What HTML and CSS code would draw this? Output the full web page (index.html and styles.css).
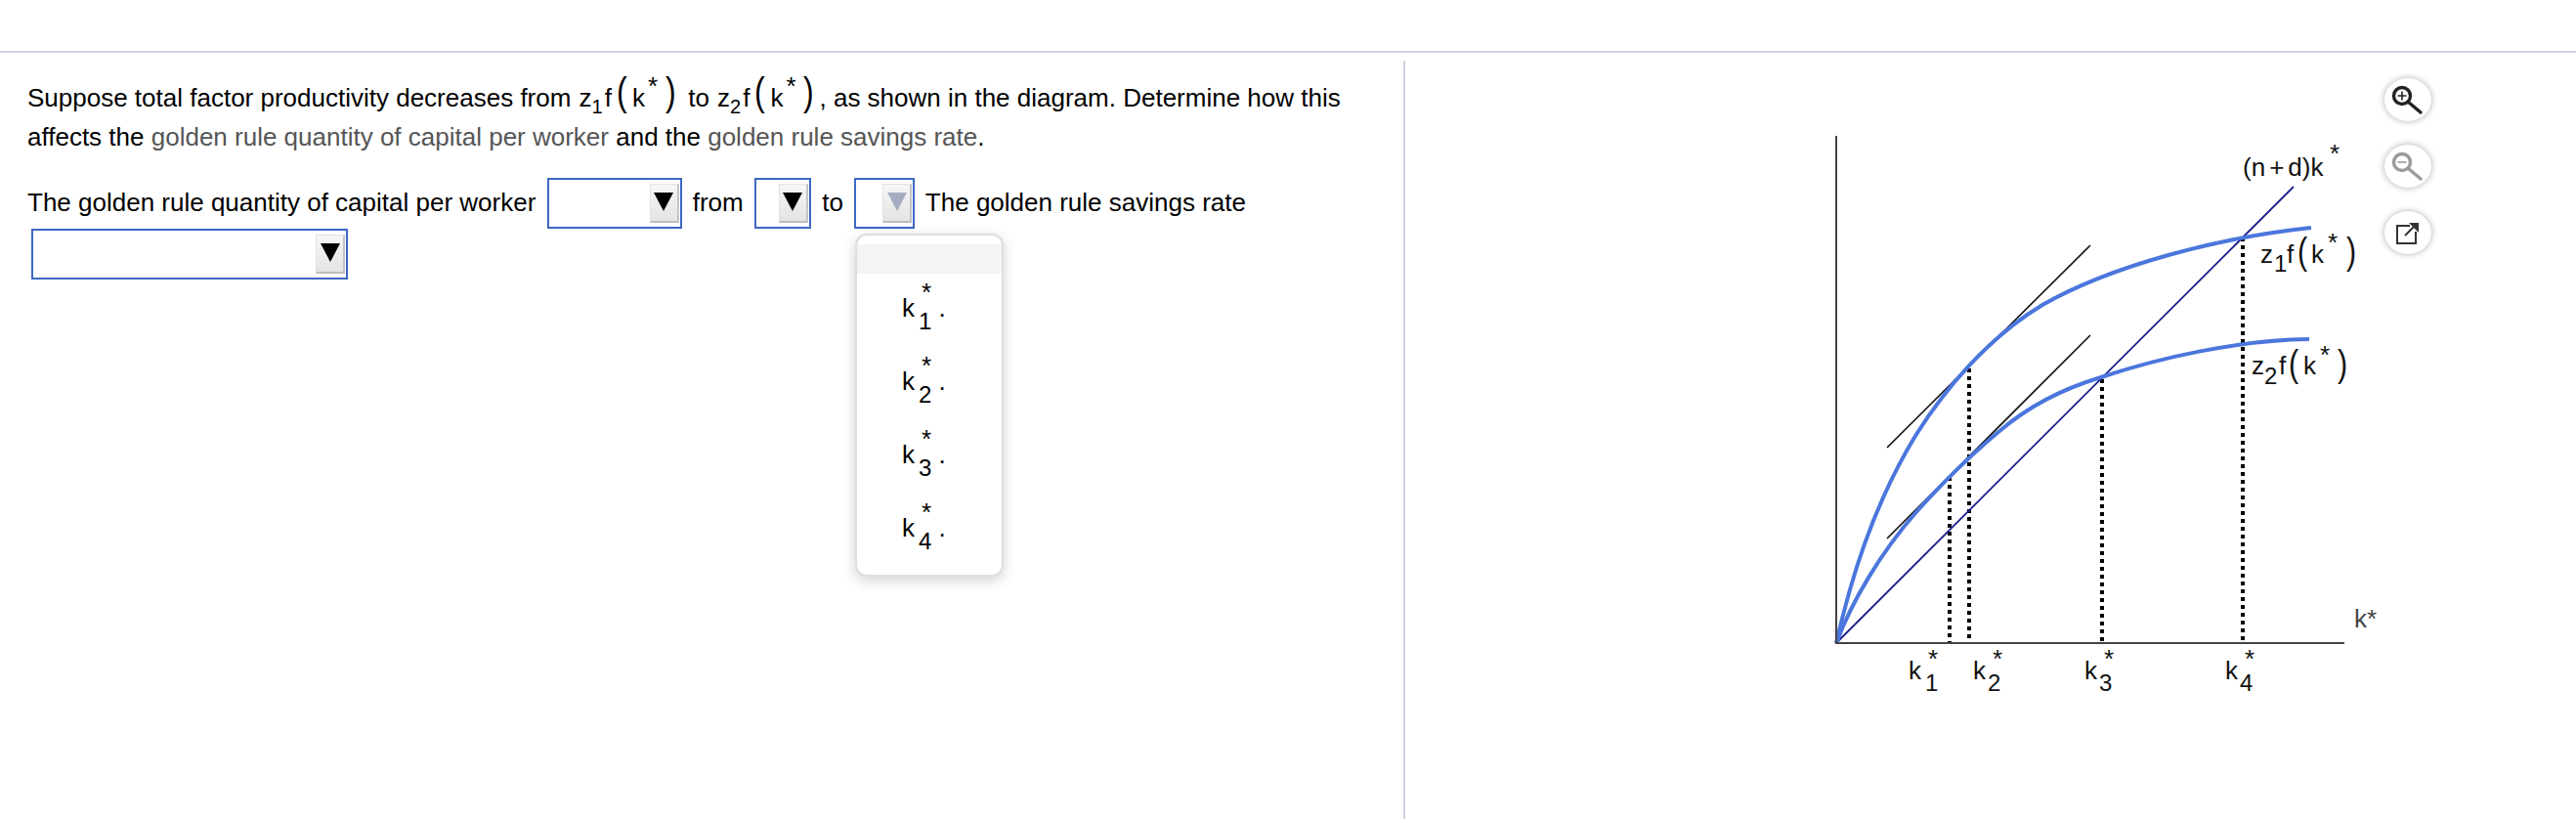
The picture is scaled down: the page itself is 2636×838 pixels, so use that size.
FILE: index.html
```html
<!DOCTYPE html>
<html lang="en">
<head>
<meta charset="utf-8">
<title>Golden rule question</title>
<link rel="stylesheet" href="styles.css">
</head>
<body>
<header class="topbar"></header>
<main class="layout">
  <section class="question">
    <p class="intro">Suppose total factor productivity decreases from <span class="m"><span class="mz">z<span class="msub">1</span></span><span class="mf">f</span><span class="paren">(</span><span class="mk">k</span><span class="mstar">*</span><span class="paren pr">)</span></span> to <span class="m"><span class="mz">z<span class="msub">2</span></span><span class="mf">f</span><span class="paren">(</span><span class="mk">k</span><span class="mstar">*</span><span class="paren pr">)</span></span>, as shown in the diagram. Determine how this affects the <span class="term">golden rule quantity of capital per worker</span> and the <span class="term">golden rule savings rate</span>.</p>
    <p class="answer">The golden rule quantity of capital per worker <span class="select w138"><span class="btn"><i class="arrow"></i></span></span> from <span class="select w58"><span class="btn"><i class="arrow"></i></span></span> to <span class="select w62 open"><span class="btn"><i class="arrow off"></i></span><span class="menu"><span class="opt blank"></span><span class="opt"><span class="k">k</span><span class="script"><span>*</span><span>1</span></span><span class="dot">.</span></span><span class="opt"><span class="k">k</span><span class="script"><span>*</span><span>2</span></span><span class="dot">.</span></span><span class="opt"><span class="k">k</span><span class="script"><span>*</span><span>3</span></span><span class="dot">.</span></span><span class="opt"><span class="k">k</span><span class="script"><span>*</span><span>4</span></span><span class="dot">.</span></span></span></span> The golden rule savings rate <span class="select w324"><span class="btn"><i class="arrow"></i></span></span></p>
  </section>
  <aside class="figure">
    <svg class="chart" viewBox="1860 120 580 600" width="580" height="600" xmlns="http://www.w3.org/2000/svg">
      <path class="tan" d="M1931 458L2139 251M1931 551L2139 343"/>
      <path class="dots" d="M1995 488V658M2015 377V658M2151 388V658M2295 243V658"/>
      <path class="cap" d="M1879 658L2347 191"/>
      <path class="curve" d="M1879 658C1893 597 1915 520 1960 446C1990 398 2035 345 2090 312C2160 272 2270 243 2365 233"/>
      <path class="curve" d="M1879 658C1895 615 1925 565 1960 525C1985 497 2015 467 2045 442C2075 416 2110 398 2150 386C2210 366 2290 348 2363 347"/>
      <path class="axis" d="M1879 139V658H2399"/>
      <text class="lab" x="2295" y="180">(n<tspan dx="4">+</tspan><tspan dx="4">d)k</tspan></text><text class="lab" x="2384" y="166">*</text>
      <text class="lab" x="2313" y="269">z</text><text class="lab sm" x="2327" y="278">1</text><text class="lab" x="2340" y="269">f</text><text class="lab tall" transform="translate(2351 270) scale(.8 1)">(</text><text class="lab" x="2365" y="269">k</text><text class="lab" x="2382" y="257">*</text><text class="lab tall" transform="translate(2401 270) scale(.8 1)">)</text>
      <text class="lab" x="2304" y="383">z</text><text class="lab sm" x="2317" y="393">2</text><text class="lab" x="2332" y="383">f</text><text class="lab tall" transform="translate(2342 385) scale(.8 1)">(</text><text class="lab" x="2357" y="383">k</text><text class="lab" x="2374" y="372">*</text><text class="lab tall" transform="translate(2392 385) scale(.8 1)">)</text>
      <text class="lab grey" x="2409" y="642">k*</text>
      <text class="lab" x="1953" y="695">k</text><text class="lab sm" x="1970" y="707">1</text><text class="lab" x="1973" y="683">*</text>
      <text class="lab" x="2019" y="695">k</text><text class="lab sm" x="2034" y="707">2</text><text class="lab" x="2039" y="683">*</text>
      <text class="lab" x="2133" y="695">k</text><text class="lab sm" x="2148" y="707">3</text><text class="lab" x="2153" y="683">*</text>
      <text class="lab" x="2277" y="695">k</text><text class="lab sm" x="2292" y="707">4</text><text class="lab" x="2297" y="683">*</text>
    </svg>
    <div class="tools">
      <span class="tool"><svg viewBox="0 0 48 44" width="48" height="44"><circle class="ic" cx="18" cy="18" r="8.5"/><path class="ic" d="M24.5 24.5L37 35"/><path class="ict" d="M13.5 18h9M18 13.5v9"/></svg></span>
      <span class="tool dim"><svg viewBox="0 0 48 44" width="48" height="44"><circle class="ic" cx="18" cy="18" r="8.5"/><path class="ic" d="M24.5 24.5L37 35"/><path class="ict" d="M13.5 18h9"/></svg></span>
      <span class="tool"><svg viewBox="0 0 48 44" width="48" height="44"><path class="ext" d="M26 15H13V33H32V21"/><path class="ext" d="M21 25L31 15"/><path class="head" d="M25 12H35V22Z"/></svg></span>
    </div>
  </aside>
</main>
</body>
</html>
```
FILE: styles.css
```css
html, body { margin: 0; height: 100%; background: #fff; overflow: hidden; }
body { font-family: "Liberation Sans", Arial, sans-serif; font-size: 26px; color: #000; }
.topbar { height: 52px; border-bottom: 2px solid #d0d3e0; }
.layout { display: flex; height: 784px; padding-top: 8px; box-sizing: border-box; }
.question { width: 1438px; box-sizing: border-box; padding: 0 38px 0 28px; border-right: 2px solid #d0d3e0; flex: none; }
.intro { margin: 0; padding-top: 18px; line-height: 40px; }
.term { color: #555; }
.m { white-space: nowrap; }
.mz { margin-left: 1px; }
.msub { font-size: 20px; vertical-align: -7px; line-height: 0; margin-right: 2px; }
.paren { display: inline-block; font-size: 40px; line-height: 20px; width: 13px; transform: scaleX(.8); transform-origin: left center; vertical-align: 1px; margin-left: 5px; }
.paren.pr { width: 10px; margin-left: 8px; margin-right: 6px; }
.mk { margin-left: 3px; }
.mstar { display: inline-block; width: 10px; margin-left: 3px; vertical-align: 12px; line-height: 0; }
.answer { margin: 22px 0 0; line-height: 30px; }
.select { display: inline-block; position: relative; box-sizing: border-box; height: 52px; margin: 0 4px; padding: 4px 1px 4px 0; border: 2px solid #3d68c4; vertical-align: -18px; }
.w138 { width: 138px; }
.w58 { width: 58px; }
.w62 { width: 62px; }
.w324 { width: 324px; }
.btn { display: block; margin-left: auto; box-sizing: border-box; width: 30px; height: 40px; padding-top: 8px; background: linear-gradient(#f6f6f6, #e4e4e4); border: 1px solid #e2e2e2; border-right: 2px solid #c4c4c4; border-bottom: 2px solid #bdbdbd; }
.arrow { display: block; width: 0; height: 0; margin: 0 auto; border-left: 10px solid transparent; border-right: 10px solid transparent; border-top: 19px solid #000; }
.arrow.off { border-top-color: #a7adc0; }
.menu { position: absolute; left: -1px; top: 55px; width: 152px; height: 351px; box-sizing: border-box; padding-top: 9px; background: #fff; border: 2px solid #dedede; border-radius: 12px; box-shadow: 0 4px 14px rgba(0, 0, 0, .18); display: flex; flex-direction: column; }
.opt { display: block; flex: none; height: 75px; padding-left: 46px; line-height: 30px; white-space: nowrap; }
.opt.blank { height: 30px; background: #f4f4f4; padding: 0; margin-bottom: 5px; }
.script { display: inline-block; vertical-align: -13px; line-height: 29px; font-size: 24px; margin-left: 4px; }
.script span { display: block; }
.script span:first-child { margin-left: 3px; font-size: 26px; }
.dot { margin-left: 7px; }
.figure { flex: 1; display: flex; justify-content: flex-end; padding: 18px 148px 0 0; align-items: flex-start; }
.chart { display: block; flex: none; margin-top: 40px; }
.tools { display: flex; flex-direction: column; gap: 24px; }
.tool { width: 48px; height: 44px; border-radius: 50%; background: #fff; box-shadow: 0 0 7px rgba(0, 0, 0, .32); }
.tool svg { display: block; }
.tool.dim svg { opacity: .45; }
.ic { fill: none; stroke: #222; stroke-width: 3.4; stroke-linecap: round; }
.ict { fill: none; stroke: #222; stroke-width: 1.6; }
.ext { fill: none; stroke: #333; stroke-width: 2; }
.head { fill: #333; }
.axis { fill: none; stroke: #444; stroke-width: 2; }
.tan { fill: none; stroke: #111; stroke-width: 1.6; }
.cap { fill: none; stroke: #1c1f8c; stroke-width: 1.8; }
.curve { fill: none; stroke: #4b76dc; stroke-width: 4; }
.dots { fill: none; stroke: #000; stroke-width: 4; stroke-dasharray: 4 4; }
.lab { font-family: "Liberation Sans", Arial, sans-serif; font-size: 26px; fill: #111; }
.sm { font-size: 24px; }
.tall { font-size: 38px; }
.grey { fill: #444; }
```
